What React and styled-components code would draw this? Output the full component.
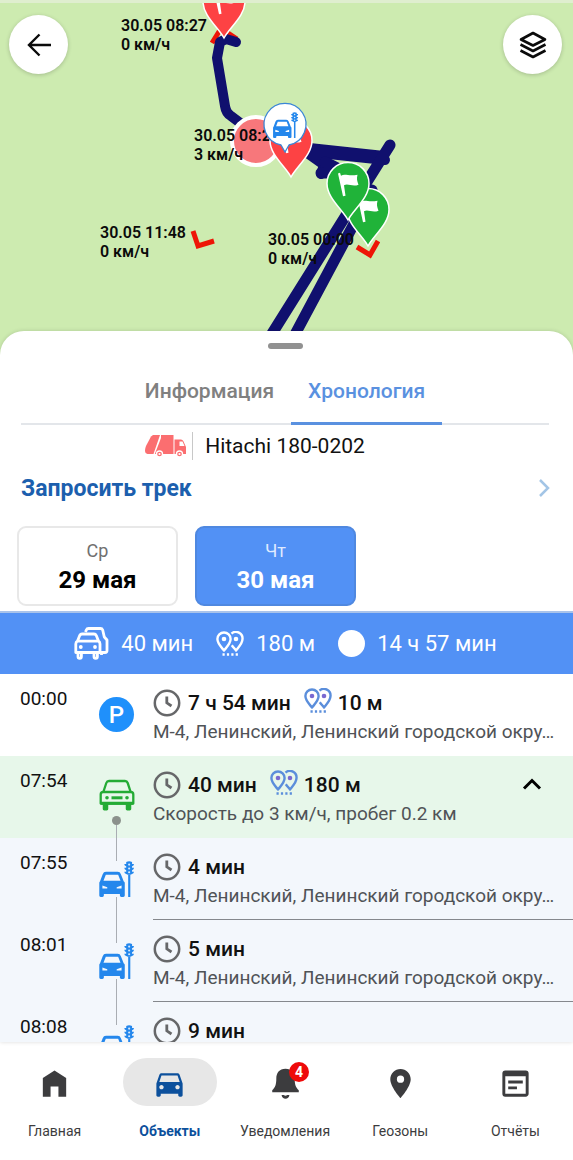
import React, { useState } from 'react'
import styled, { createGlobalStyle } from 'styled-components'
import { MdDirectionsCar, MdPlace, MdWysiwyg } from 'react-icons/md'

const days = [
  { id: 29, weekday: 'Ср', date: '29 мая' },
  { id: 30, weekday: 'Чт', date: '30 мая' },
]

const address = 'М-4, Ленинский, Ленинский городской окру…'

const events = [
  { time: '00:00', kind: 'parking', duration: '7 ч 54 мин', distance: '10 м', text: address },
  { time: '07:54', kind: 'trip', duration: '40 мин', distance: '180 м', text: 'Скорость до 3 км/ч, пробег 0.2 км' },
  { time: '07:55', kind: 'stop', duration: '4 мин', text: address },
  { time: '08:01', kind: 'stop', duration: '5 мин', text: address },
  { time: '08:08', kind: 'stop', duration: '9 мин', text: address },
]

const mapLabels = [
  { x: 121, y: 16, time: '30.05 08:27', speed: '0 км/ч' },
  { x: 194, y: 126, time: '30.05 08:27', speed: '3 км/ч' },
  { x: 100, y: 223, time: '30.05 11:48', speed: '0 км/ч' },
  { x: 268, y: 230, time: '30.05 00:00', speed: '0 км/ч' },
]

const rowColors = {
  parking: '#ffffff',
  trip: '#e7f7ea',
  stop: '#f3f7fc',
}

/* ---------- icons ---------- */

function ArrowIcon() {
  return (
    <svg width="26" height="26" viewBox="0 0 26 26" fill="none" stroke="#0b0b0b" strokeWidth="2.4">
      <path d="M25 13H3M13.500 2.500 3 13l10.500 10.500" />
    </svg>
  )
}

function LayersIcon() {
  return (
    <svg width="28" height="28" viewBox="0 0 28 28" fill="none" stroke="#0b0b0b" strokeWidth="2.600" strokeLinejoin="round">
      <path d="M14 2 26 8.500 14 14.500 2 8.500z" />
      <path d="M1.500 13.500 14 20l12.500-6.500M1.500 19.500 14 26l12.500-6.500" />
    </svg>
  )
}

function ClockIcon() {
  return (
    <svg width="28" height="28" viewBox="0 0 28 28" fill="none" stroke="#666769" strokeWidth="2.500">
      <circle cx="14" cy="14" r="12.200" />
      <path d="M13.800 7.500v6.300l4.700 3.200" strokeWidth="2.800" />
    </svg>
  )
}

function PinsIcon({ dot = 'currentColor' }) {
  return (
    <svg width="28" height="26" viewBox="0 0 28 26" fill="none" stroke="currentColor" strokeWidth="2.400" strokeLinejoin="round">
      <path d="M8 19.500C5 15.800 1.400 12.500 1.400 8.100a6.600 6.600 0 0 1 13.200 0C14.600 12.500 11 15.800 8 19.500z" />
      <path d="M15.500 2.600a6.600 6.600 0 0 1 11 5.500c0 4.400-3.500 7.700-6.500 11.400-1.500-1.900-2.900-3.500-4.200-5.300" />
      <circle cx="8" cy="8" r="2.300" fill={dot} stroke="none" />
      <circle cx="20" cy="8" r="2.300" fill={dot} stroke="none" />
      <path d="M6.500 23.500h16" strokeDasharray="2.200 2.200" />
    </svg>
  )
}

function TrafficIcon() {
  return (
    <svg width="100%" height="100%" viewBox="0 0 36 37" fill="#2487ec">
      <path
        fillRule="evenodd"
        d="M3.800 13.500Q4.700 11 7.200 11h12q2.500 0 3.300 2.500L25.500 21q1 .5 1 1.500v13q0 1.500-1.500 1.500h-2q-1.500 0-1.500-1.500V34H5v1.500Q5 37 3.500 37H1.700Q.3 37 .3 35.500v-13Q.3 21.500 1 21zM7 14 4.600 20.200h17.500L19.700 14zM3.500 25.300v3h5V27zM23.200 25.300v3h-5V27z"
      />
      <path d="M30 14h2.200v23H30z" />
      <path d="M28 1q3-1.500 6 0v2h2q0 2-2 2.500v1.500h2q0 2-2 2.500V11h2q0 2-2.500 2.500-2.500 1.500-5 0Q26 13 26 11h2V9.500Q26 9 26 7h2V5.500Q26 5 26 3h2z" />
      <g fill="#d7eafc">
        <circle cx="31" cy="3.700" r="1.100" />
        <circle cx="31" cy="7.700" r="1.100" />
        <circle cx="31" cy="11.600" r="1.100" />
      </g>
    </svg>
  )
}

function GreenCarIcon() {
  return (
    <svg width="36" height="32" viewBox="0 0 36 32" fill="none" stroke="#24ab35" strokeWidth="2.300">
      <path d="M4.500 12.500 7.300 4Q8 2 10 2h16q2 0 2.700 2l2.800 8.500" />
      <path d="M1.700 15.500q0-2.500 2.500-2.500h27.600q2.500 0 2.500 2.500v9H1.700z" strokeLinejoin="round" />
      <path d="M1.700 24.300h32.600" strokeWidth="3" />
      <path d="M4.500 24h4v6q0 .7-.7.700H5.200q-.7 0-.7-.7zM27.500 24h4v6q0 .7-.7.700h-2.600q-.7 0-.7-.7z" fill="#24ab35" strokeWidth="1.500" />
      <path d="M12.500 18.800h11" strokeWidth="3" />
      <circle cx="8" cy="18.800" r="1.800" fill="#24ab35" stroke="none" />
      <circle cx="28" cy="18.800" r="1.800" fill="#24ab35" stroke="none" />
    </svg>
  )
}

function CarsIcon() {
  return (
    <svg width="35" height="33" viewBox="0 0 35 33" fill="none" stroke="#fff" strokeWidth="2.800" strokeLinejoin="round">
      <path d="M11.500 5 12.300 3q.6-1.500 2.200-1.500h12q1.600 0 2.200 1.500l1.600 7 2.700 3v10.500q0 2-2 2H27.500V28" />
      <path d="m3.500 14 2.200-5.500Q6.500 7 8 7h12q1.600 0 2.300 1.500L24.500 14q1.500 1 1.500 3v8.500H1.800V17q0-2 1.700-3zM3.500 14.200h21" />
      <path d="M4 26v3.500q0 1.800 1.700 1.800t1.700-1.800V26M20 26v3.500q0 1.800 1.700 1.800t1.700-1.800V26" />
      <circle cx="6.800" cy="20" r="1.900" fill="#fff" stroke="none" />
      <circle cx="21" cy="20" r="1.900" fill="#fff" stroke="none" />
    </svg>
  )
}

function TruckIcon() {
  return (
    <svg width="42" height="24" viewBox="0 0 42 24" fill="#fb6e70">
      <path d="M6 2.500 8 1h7L8.500 20H2.500Q0 19.500 0 16.500q0-2 1-4.500z" />
      <path d="M16 4V1h12.500v19H9.800z" />
      <path fillRule="evenodd" d="M29.500 5.500H36q1.500 0 2.300 1.500L41 13v7H29.500zM34.500 7.500V12h5l-2-4.500z" />
      <circle cx="14.500" cy="20" r="3" stroke="#fff" strokeWidth="1.300" />
      <circle cx="34.500" cy="20" r="3" stroke="#fff" strokeWidth="1.300" />
      <circle cx="14.500" cy="20" r="1.100" fill="#fff" />
      <circle cx="34.500" cy="20" r="1.100" fill="#fff" />
    </svg>
  )
}

function HomeIcon() {
  return (
    <svg width="35" height="35" viewBox="0 0 24 24" fill="currentColor">
      <path d="M4 21V8.300L12 3l8 5.300V21h-5.300v-7H9.300v7z" />
    </svg>
  )
}

function BellIcon() {
  return (
    <svg width="35" height="35" viewBox="0 0 24 24" fill="currentColor">
      <path d="M12 1.800c-4.300 0-6.300 3-6.300 6.700 0 4.300-.8 6-2.800 8.200V18h18.200v-1.300c-2-2.200-2.800-3.900-2.800-8.200 0-3.700-2-6.700-6.300-6.700z" />
      <path d="M9.300 19.900h1.500q1.200 1 2.400 0h1.500q-.5 2.600-2.700 2.600t-2.700-2.600z" />
    </svg>
  )
}

function FlagPin({ x, y, color }) {
  return (
    <g transform={`translate(${x} ${y})`}>
      <path d="M0 0C-6-11-21-22-21-36.500a21 21 0 0 1 42 0C21-22 6-11 0 0z" fill={color} stroke="#fff" strokeWidth="1.500" />
      <path d="M-10-46.500l2-.8 1 3c4-2.500 8 1 16.500-1-1 4-.5 6 1 10-6 2.500-10-1.500-14.500.5l1.500 10.500-2.500.5z" fill="#fff" />
    </g>
  )
}

function Tracks() {
  return (
    <MapLayer viewBox="0 0 573 356" preserveAspectRatio="xMidYMin slice" aria-hidden="true">
      <g fill="none" stroke="#ee1507" strokeWidth="5">
        <path d="m193 231 5 15 16-5M357 247l13 8 8-14M212 43l8-13M228 33l9 6" />
      </g>
      <g fill="none" stroke="#10106e" strokeLinecap="round" strokeLinejoin="round">
        <path d="M236 42 226 39 220 42 217 58l8 48q1 7 6 10l12 9" strokeWidth="10" />
        <path d="M300 147 384 156M310 152 385 160M300 148l24 17-3 9" strokeWidth="10" />
        <path d="M321 173h14M325 162l20 10M390 145 268 340" strokeWidth="11" />
        <path d="M372 190 292 340" strokeWidth="11" />
      </g>
      <circle cx="256" cy="141" r="24" fill="#f7777b" stroke="#fff" strokeWidth="4" />
    </MapLayer>
  )
}

function Markers() {
  return (
    <MapLayer viewBox="0 0 573 356" preserveAspectRatio="xMidYMin slice" aria-hidden="true">
      <FlagPin x={224} y={38} color="#fd4244" />
      <FlagPin x={291} y={177} color="#fd4244" />
      <FlagPin x={368} y={246} color="#20b339" />
      <FlagPin x={348} y={220} color="#20b339" />
      <path d="M281 145a21 21 0 1 1 8 0l-4 7z" fill="#fff" stroke="#3b86d6" strokeWidth="1.300" />
      <svg x="272" y="112" width="27" height="26">
        <TrafficIcon />
      </svg>
    </MapLayer>
  )
}

/* ---------- screen ---------- */

function TimelineRow({ event, expanded, onToggle }) {
  const { time, kind, duration, distance, text } = event
  return (
    <Row $kind={kind}>
      <Time>{time}</Time>
      <Rail>
        <Segment $visible={kind === 'stop'} />
        {kind === 'parking' && <Parking>P</Parking>}
        {kind === 'trip' && (
          <>
            <GreenCarIcon />
            <Dot />
          </>
        )}
        {kind === 'stop' && (
          <StopIcon>
            <TrafficIcon />
          </StopIcon>
        )}
        <Tail $visible={kind !== 'parking'} />
      </Rail>
      <Details $divided={kind === 'stop'}>
        <Measures>
          <ClockIcon />
          <strong>{duration}</strong>
          {distance && (
            <Distance>
              <PinsIcon dot="#7a69d0" />
              <strong>{distance}</strong>
            </Distance>
          )}
        </Measures>
        <Description>{text}</Description>
        {kind === 'trip' && (
          <Toggle type="button" aria-label="Свернуть" aria-expanded={expanded} onClick={onToggle}>
            <svg width="20" height="14" viewBox="0 0 20 14" fill="none" stroke="#000" strokeWidth="3">
              <path d="m2 11.500 8-8 8 8" />
            </svg>
          </Toggle>
        )}
      </Details>
    </Row>
  )
}

function App() {
  const [day, setDay] = useState(30)
  const [expanded, setExpanded] = useState(true)

  const visible = events.filter((event) => expanded || event.kind !== 'stop')

  return (
    <Screen>
      <GlobalStyle />
      <Map>
        <Tracks />
        {mapLabels.map((label) => (
          <MapLabel key={`${label.x}-${label.y}`} $x={label.x} $y={label.y}>
            {label.time}
            <br />
            {label.speed}
          </MapLabel>
        ))}
        <Markers />
        <MapBar>
          <RoundButton type="button" aria-label="Назад">
            <ArrowIcon />
          </RoundButton>
          <RoundButton type="button" aria-label="Слои">
            <LayersIcon />
          </RoundButton>
        </MapBar>
      </Map>

      <Sheet>
        <Handle />
        <Tabs>
          <Tab type="button">Информация</Tab>
          <Tab type="button" $active>Хронология</Tab>
        </Tabs>
        <Vehicle>
          <TruckIcon />
          <VehicleName>Hitachi 180-0202</VehicleName>
        </Vehicle>
        <TrackLink href="#track">
          Запросить трек
          <svg width="12" height="20" viewBox="0 0 12 20" fill="none" stroke="#a3c5e6" strokeWidth="2.500">
            <path d="m2 2 8 8-8 8" />
          </svg>
        </TrackLink>
        <Days>
          {days.map((item) => (
            <Day key={item.id} type="button" $active={item.id === day} onClick={() => setDay(item.id)}>
              <span>{item.weekday}</span>
              <strong>{item.date}</strong>
            </Day>
          ))}
        </Days>
        <Summary>
          <Stat><CarsIcon />40 мин</Stat>
          <Stat><PinsIcon />180 м</Stat>
          <Stat><Disc />14 ч 57 мин</Stat>
        </Summary>
        <Timeline>
          {visible.map((event) => (
            <TimelineRow
              key={event.time}
              event={event}
              expanded={expanded}
              onToggle={() => setExpanded(!expanded)}
            />
          ))}
        </Timeline>
      </Sheet>

      <Nav>
        <NavItem href="#home">
          <NavIcon><HomeIcon /></NavIcon>
          Главная
        </NavItem>
        <NavItem href="#objects" $active>
          <NavIcon $active><MdDirectionsCar size={35} /></NavIcon>
          Объекты
        </NavItem>
        <NavItem href="#notifications">
          <NavIcon>
            <BellIcon />
            <Badge>4</Badge>
          </NavIcon>
          Уведомления
        </NavItem>
        <NavItem href="#zones">
          <NavIcon><MdPlace size={35} /></NavIcon>
          Геозоны
        </NavItem>
        <NavItem href="#reports">
          <NavIcon><MdWysiwyg size={35} /></NavIcon>
          Отчёты
        </NavItem>
      </Nav>
    </Screen>
  )
}

export default App

const GlobalStyle = createGlobalStyle`
  * {
    box-sizing: border-box;
  }
  body {
    margin: 0;
    background: #fff;
    color: #111;
    font-family: Roboto, "Liberation Sans", sans-serif;
  }
  button {
    padding: 0;
    border: 0;
    background: none;
    color: inherit;
    font: inherit;
    cursor: pointer;
  }
  a {
    color: inherit;
    text-decoration: none;
  }
  svg {
    display: block;
    flex: none;
  }
`

const Screen = styled.div`
  display: flex;
  flex-direction: column;
  height: 100vh;
  overflow: hidden;
`

const Map = styled.section`
  position: relative;
  flex: none;
  height: 356px;
  overflow: hidden;
  border-top: 3px solid #dfeecf;
  background: #cdebb0;
`

// the drawing's origin is the top of the screen, above the light strip
const MapLayer = styled.svg`
  position: absolute;
  top: -3px;
  left: 0;
  width: 100%;
  height: 356px;
`

const MapLabel = styled.div`
  position: absolute;
  left: ${({ $x }) => $x}px;
  top: ${({ $y }) => $y - 3}px;
  color: #0a0a0a;
  font-size: 16px;
  font-weight: 600;
  line-height: 19px;
  white-space: nowrap;
`

const MapBar = styled.div`
  position: relative;
  display: flex;
  justify-content: space-between;
  padding: 12px 11px 0 9px;
`

const RoundButton = styled.button`
  display: flex;
  align-items: center;
  justify-content: center;
  width: 59px;
  height: 59px;
  border-radius: 50%;
  background: #fff;
  box-shadow: 0 1px 4px rgba(0, 0, 0, 0.2);
`

const Sheet = styled.main`
  position: relative;
  display: flex;
  flex: 1;
  flex-direction: column;
  min-height: 0;
  margin-top: -25px;
  border-radius: 24px 24px 0 0;
  background: #fff;
  box-shadow: 0 0 4px rgba(0, 0, 0, 0.15);
`

const Handle = styled.div`
  flex: none;
  align-self: center;
  width: 35px;
  height: 6px;
  margin: 12px 3px 0 0;
  border-radius: 3px;
  background: #919191;
`

const Tabs = styled.div`
  display: flex;
  flex: none;
  justify-content: center;
  height: 76px;
  margin: 0 24px 0 21px;
  border-bottom: 2px solid #e3e6ea;
`

const Tab = styled.button`
  height: 76px;
  padding: 10px 17px 0;
  border-bottom: 3px solid ${({ $active }) => ($active ? '#5a91e0' : 'transparent')};
  color: ${({ $active }) => ($active ? '#5a91e0' : '#808080')};
  font-size: 21px;
  font-weight: 500;
`

const Vehicle = styled.div`
  display: flex;
  flex: none;
  align-items: center;
  justify-content: center;
  gap: 5px;
  height: 42px;
  padding-right: 63px;
`

const VehicleName = styled.h1`
  margin: 0;
  padding-left: 12px;
  border-left: 1px solid #c8c8c8;
  font-size: 21px;
  font-weight: 400;
  line-height: 28px;
`

const TrackLink = styled.a`
  display: flex;
  flex: none;
  align-items: center;
  justify-content: space-between;
  height: 42px;
  padding: 0 23px 0 21px;
  color: #1c5fae;
  font-size: 23px;
  font-weight: 700;
`

const Days = styled.div`
  display: flex;
  flex: none;
  gap: 17px;
  padding: 17px 17px 5px;
`

const Day = styled.button`
  display: flex;
  flex-direction: column;
  align-items: center;
  justify-content: center;
  gap: 4px;
  width: 161px;
  height: 80px;
  border: 2px solid ${({ $active }) => ($active ? '#4f88e0' : '#e8e8e8')};
  border-radius: 9px;
  background: ${({ $active }) => ($active ? '#5291f5' : '#fff')};
  color: ${({ $active }) => ($active ? '#fff' : '#000')};

  span {
    color: ${({ $active }) => ($active ? '#dfeaff' : '#707070')};
    font-size: 18px;
    line-height: 24px;
  }

  strong {
    font-size: 24px;
    font-weight: 700;
    line-height: 26px;
  }
`

const Summary = styled.div`
  display: flex;
  flex: none;
  align-items: center;
  justify-content: center;
  gap: 23px;
  height: 63px;
  border-top: 2px solid #a9c3ea;
  padding-right: 2px;
  background: #5291f5;
`

const Stat = styled.div`
  display: flex;
  align-items: center;
  gap: 12px;
  color: #fff;
  font-size: 22px;
`

const Disc = styled.i`
  width: 27px;
  height: 27px;
  border-radius: 50%;
  background: #fff;
`

const Timeline = styled.ol`
  flex: 1;
  min-height: 0;
  margin: 0;
  padding: 0;
  overflow: hidden;
  list-style: none;
`

const Row = styled.li`
  display: grid;
  grid-template-columns: 79px 35px 1fr;
  height: 82px;
  padding-left: 20px;
  background: ${({ $kind }) => rowColors[$kind]};
`

const Time = styled.time`
  padding-top: 13px;
  font-size: 19px;
  line-height: 24px;
`

const Rail = styled.div`
  display: flex;
  flex-direction: column;
  align-items: center;
`

const Segment = styled.i`
  flex: none;
  width: 1px;
  height: 23px;
  background: ${({ $visible }) => ($visible ? '#a9adb3' : 'transparent')};
`

const Tail = styled(Segment)`
  flex: 1;
`

const StopIcon = styled.div`
  flex: none;
  width: 35px;
  height: 36px;
`

const Parking = styled.b`
  display: flex;
  flex: none;
  align-items: center;
  justify-content: center;
  width: 35px;
  height: 35px;
  border-radius: 50%;
  background: #1f90fb;
  color: #fff;
  font-size: 24px;
  font-weight: 500;
`

const Dot = styled.i`
  flex: none;
  width: 9px;
  height: 9px;
  margin-top: 5px;
  border-radius: 50%;
  background: #8b918c;
`

const Details = styled.div`
  position: relative;
  min-width: 0;
  margin-left: 19px;
  padding: 15px 16px 0 0;
  border-bottom: ${({ $divided }) => ($divided ? '1px solid #85888d' : '0')};
`

const Measures = styled.div`
  display: flex;
  align-items: center;
  gap: 7px;
  height: 28px;

  strong {
    font-size: 21px;
    font-weight: 500;
  }
`

const Distance = styled.span`
  display: flex;
  align-items: center;
  gap: 6px;
  margin-left: 6px;
  color: #5b8edb;

  strong {
    color: #111;
  }

  svg {
    margin-bottom: 4px;
  }
`

const Description = styled.p`
  margin: 3px 0 0;
  overflow: hidden;
  color: #505357;
  font-size: 19px;
  line-height: 24px;
  text-overflow: ellipsis;
  white-space: nowrap;
`

const Toggle = styled.button`
  position: absolute;
  top: 16px;
  right: 27px;
  display: flex;
  align-items: center;
  justify-content: center;
  width: 28px;
  height: 24px;
`

const Nav = styled.nav`
  display: flex;
  flex: none;
  height: 118px;
  margin-left: -3px;
  padding-top: 16px;
  background: #fff;
`

const NavItem = styled.a`
  display: flex;
  flex: 1 1 0;
  flex-direction: column;
  align-items: center;
  gap: 15px;
  min-width: 0;
  color: ${({ $active }) => ($active ? '#0c509c' : '#3c3c3e')};
  font-size: 14px;
  font-weight: ${({ $active }) => ($active ? 700 : 400)};
  line-height: 20px;
`

const NavIcon = styled.span`
  position: relative;
  display: flex;
  align-items: center;
  justify-content: center;
  width: 94px;
  height: 48px;
  padding-top: 2px;
  border-radius: 24px;
  background: ${({ $active }) => ($active ? '#e7e7e7' : 'transparent')};
`

const Badge = styled.span`
  position: absolute;
  top: 4px;
  left: 51px;
  width: 20px;
  height: 20px;
  border-radius: 50%;
  background: #ee0a0a;
  color: #fff;
  font-size: 14px;
  font-weight: 700;
  text-align: center;
`
